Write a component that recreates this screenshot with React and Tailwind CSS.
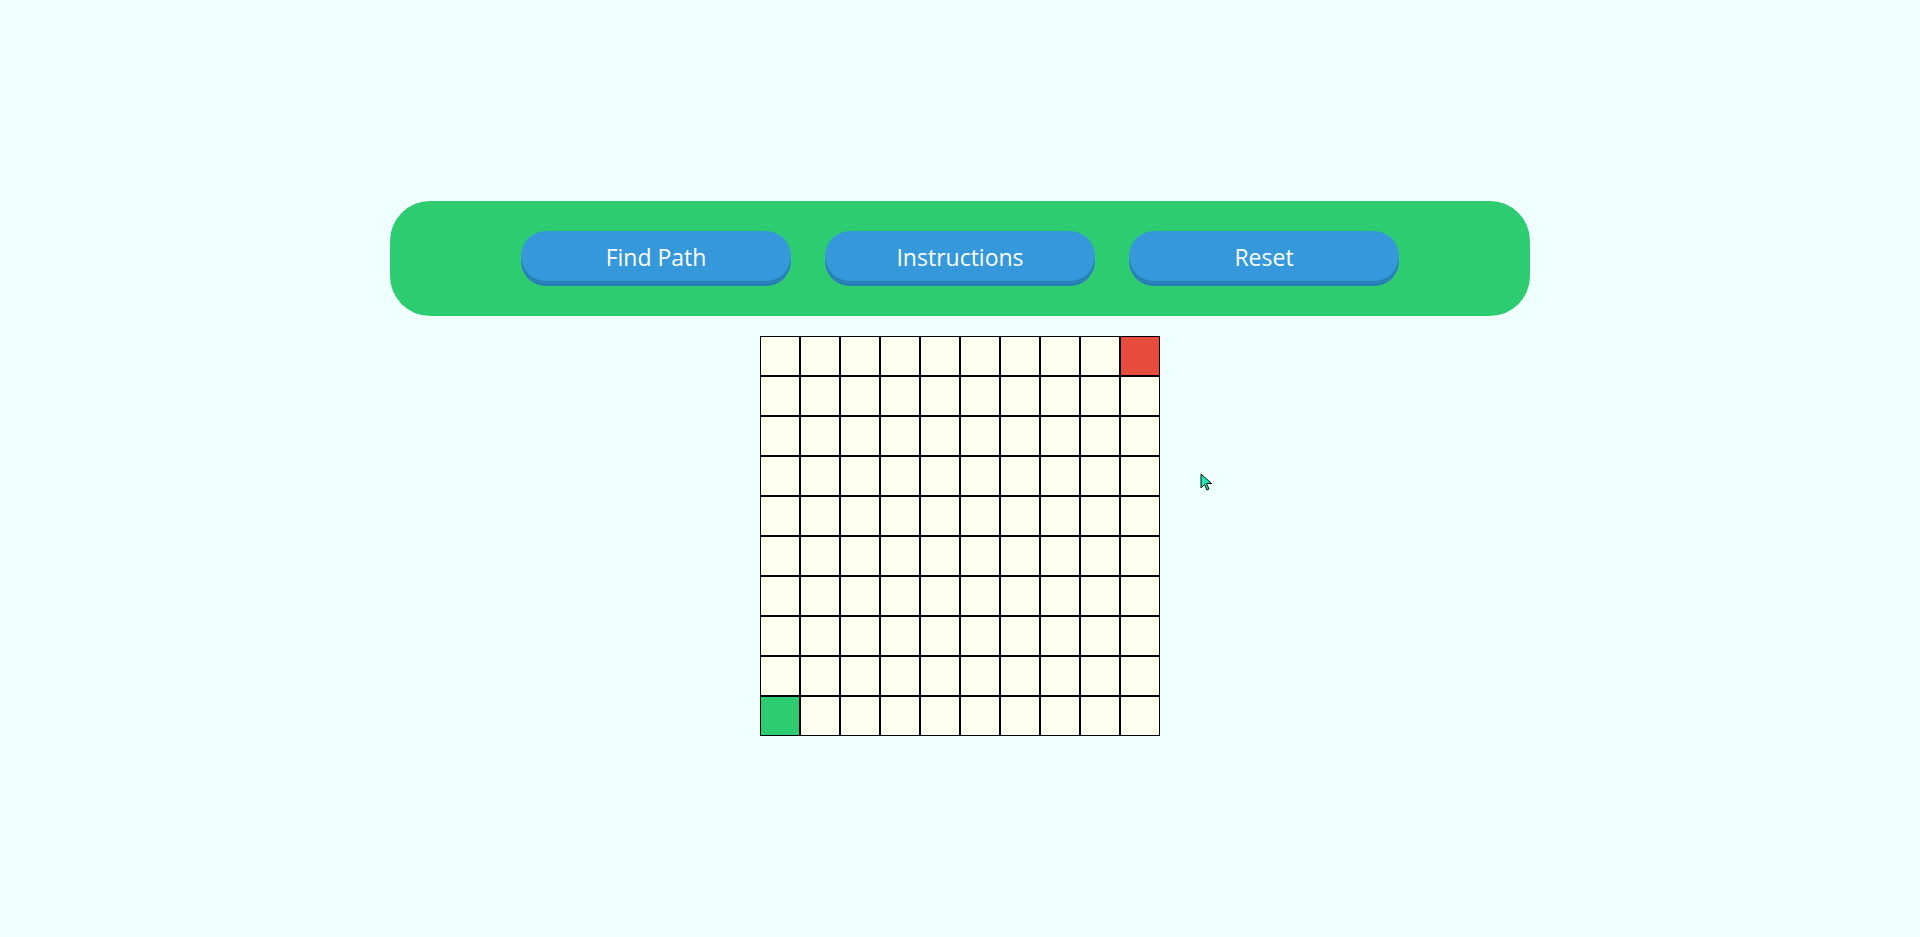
import React from 'react'

const buttons = ['Find Path', 'Instructions', 'Reset']

function Cell({ r, c }) {
  let bg = 'bg-[#fffff0]'
  if (r === 0 && c === 9) bg = 'bg-[#e74c3c]'
  if (r === 9 && c === 0) bg = 'bg-[#2ecc71]'
  return <div className={`w-10 h-10 border border-black ${bg}`} />
}

export default function App() {
  return (
    <div
      className="relative min-h-[937px] w-full bg-[#f0ffff] flex flex-col items-center pt-[201px]"
      style={{ fontFamily: '"Open Sans", "Noto Sans", sans-serif' }}
    >
      {/* Controls */}
      <div className="w-[1140px] bg-[#2ecc71] rounded-[40px] pt-[30px] pb-[35px] flex justify-center gap-[34px]">
        {buttons.map((label) => (
          <button
            key={label}
            className="w-[270px] h-[50px] rounded-[25px] bg-[#3498db] text-white text-[23px] pt-[3px] shadow-[0_5px_0_#2980b9] flex items-center justify-center"
          >
            {label}
          </button>
        ))}
      </div>

      {/* Grid */}
      <div className="mt-5 grid grid-cols-10 w-[400px]">
        {Array.from({ length: 10 }).map((_, r) =>
          Array.from({ length: 10 }).map((_, c) => <Cell key={`${r}-${c}`} r={r} c={c} />)
        )}
      </div>

      {/* mouse pointer */}
      <svg className="absolute left-[1200px] top-[473px]" width="14" height="20" viewBox="0 0 14 20">
        <path d="M1 1 L1 15 L4.5 11.5 L7 17 L9 16 L6.5 10.5 L11.5 10.5 Z" fill="#1de9b6" stroke="#111" strokeWidth="1" strokeLinejoin="round" />
      </svg>
    </div>
  )
}
